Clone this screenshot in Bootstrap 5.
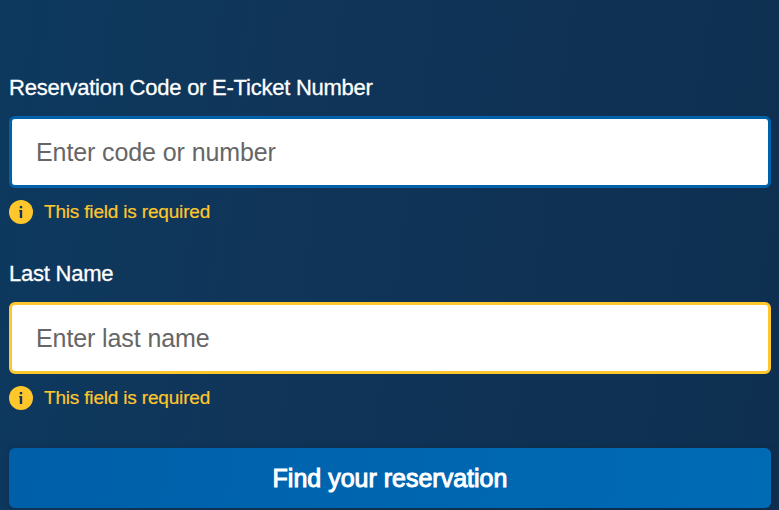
<!DOCTYPE html>
<html lang="en">
<head>
<meta charset="utf-8">
<meta name="viewport" content="width=device-width, initial-scale=1">
<title>Find your reservation</title>
<link href="https://cdn.jsdelivr.net/npm/bootstrap@5.3.0/dist/css/bootstrap.min.css" rel="stylesheet">
<style>
  body { font-family: "Liberation Sans", Arial, sans-serif; background: linear-gradient(98deg, #0d395f 0%, #103559 35%, #0e2f50 100%); }
  .trip-form { padding: 73px 8px 0 9px; }
  .trip-label { font-size: 22px; line-height: 30px; letter-spacing: -.24px; -webkit-text-stroke: .3px #fff; }
  .trip-input, .trip-input:focus { height: 72px; margin-top: 13px; border: 3px solid #0061ab; border-radius: 6px; padding: 0 24px; font-size: 25px; letter-spacing: -.1px; color: #333; background: #fff; box-shadow: none; }
  .trip-input.warned { border-color: #ffc72c; }
  .trip-input::placeholder { color: #666; opacity: 1; }
  .trip-error { height: 24px; margin-top: 12px; gap: 11px; color: #ffc72c; font-size: 19px; line-height: 24px; letter-spacing: -.18px; -webkit-text-stroke: .2px #ffc72c; }
  .field-two { margin-top: 35px; }
  .trip-submit { height: 60px; margin-top: 38px; padding: 0; border: 0; border-radius: 6px; color: #fff; font-size: 25px; line-height: 60px; -webkit-text-stroke: 1px #fff; background: linear-gradient(100deg, #005fa9, #006bb5); box-shadow: 0 0 8px rgba(0,0,0,.15); }
  .trip-submit:hover { color: #fff; }
</style>
<script src="https://cdn.jsdelivr.net/npm/bootstrap@5.3.0/dist/js/bootstrap.bundle.min.js"></script>
</head>
<body class="vh-100 overflow-hidden">
<form class="trip-form d-flex flex-column" novalidate>
  <div class="d-flex flex-column">
    <label class="trip-label text-white mb-0" for="code">Reservation Code or E-Ticket Number</label>
    <input class="form-control trip-input" id="code" type="text" placeholder="Enter code or number">
    <div class="trip-error d-flex align-items-center">
      <svg width="24" height="24" viewBox="0 0 24 24" aria-hidden="true"><circle cx="12" cy="12" r="12" fill="#ffc72c"/><path d="M10.8 6h2.4v2.2h-2.4zM10.2 10h3v8h-2.4v-6.5h-.6z" fill="#10355a"/></svg>
      <span>This field is required</span>
    </div>
  </div>
  <div class="field-two d-flex flex-column">
    <label class="trip-label text-white mb-0" for="surname">Last Name</label>
    <input class="form-control trip-input warned" id="surname" type="text" placeholder="Enter last name">
    <div class="trip-error d-flex align-items-center">
      <svg width="24" height="24" viewBox="0 0 24 24" aria-hidden="true"><circle cx="12" cy="12" r="12" fill="#ffc72c"/><path d="M10.8 6h2.4v2.2h-2.4zM10.2 10h3v8h-2.4v-6.5h-.6z" fill="#10355a"/></svg>
      <span>This field is required</span>
    </div>
  </div>
  <button class="btn w-100 trip-submit" type="button">Find your reservation</button>
</form>
</body>
</html>
